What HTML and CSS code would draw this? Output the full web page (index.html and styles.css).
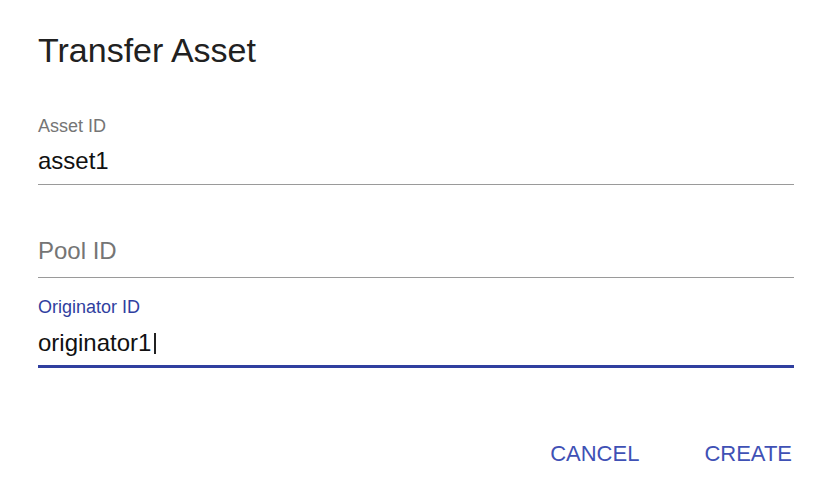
FILE: index.html
```html
<!DOCTYPE html>
<html>
<head>
  <title>Transfer Asset</title>
  <link rel="stylesheet" href="styles.css">
</head>
<body>
  <div class="dialog">
    <h1 class="dialog-title">Transfer Asset</h1>
    <div class="dialog-content">
      <div class="field">
        <div class="field-label">Asset ID</div>
        <div class="field-input">asset1</div>
      </div>
      <div class="field field-empty">
        <div class="field-input placeholder">Pool ID</div>
      </div>
      <div class="field field-focused">
        <div class="field-label">Originator ID</div>
        <div class="field-input">originator1<span class="caret"></span></div>
      </div>
    </div>
    <div class="dialog-actions">
      <button>CANCEL</button>
      <button>CREATE</button>
    </div>
  </div>
</body>
</html>
```

FILE: styles.css
```css
body {
  margin: 0;
  background-color: #fff;
  font-family: "Liberation Sans", Arial, sans-serif;
}
.dialog {
  width: 830px;
  height: 496px;
  padding: 30px 36px 0 38px;
  box-sizing: border-box;
}
.dialog-title {
  margin: 0;
  font-size: 34px;
  line-height: 40px;
  font-weight: normal;
  color: #212121;
}
.dialog-content {
  margin-top: 46px;
}
.field {
  border-bottom: 1px solid #9a9a9a;
  margin-bottom: 23px;
}
.field-label {
  font-size: 18px;
  line-height: 20px;
  color: #757575;
}
.field-input {
  margin-top: 11px;
  padding-bottom: 9px;
  font-size: 24px;
  line-height: 28px;
  color: #111;
}
.field-empty .field-input {
  margin-top: 0;
  padding: 29px 0 12px;
}
.placeholder {
  color: #757575;
}
.field-focused {
  border-bottom: 3px solid #303f9f;
  margin-top: -4px;
}
.field-focused .field-label {
  color: #303f9f;
}
.field-focused .field-input {
  margin-top: 12px;
  padding-bottom: 8px;
}
.caret {
  display: inline-block;
  width: 2px;
  height: 21px;
  margin-left: 3px;
  vertical-align: -3px;
  background-color: #222;
}
.dialog-actions {
  display: flex;
  justify-content: flex-end;
  gap: 33px;
  margin-top: 73px;
  margin-right: -14px;
}
.dialog-actions button {
  padding: 0 16px;
  border: none;
  background: none;
  font-family: "Liberation Sans", Arial, sans-serif;
  font-size: 22px;
  line-height: 26px;
  color: #3f51b5;
  cursor: pointer;
}
```
